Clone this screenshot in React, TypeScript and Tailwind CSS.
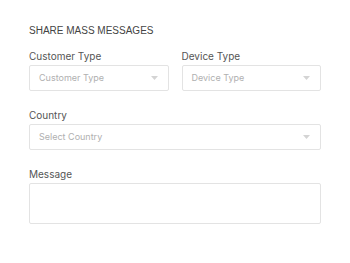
import { ReactNode } from 'react'

function Caret() {
  return (
    <svg width="7" height="4" viewBox="0 0 7 4" className="shrink-0">
      <path d="M0 0 L7 0 L3.5 4 Z" fill="#d4d4d4" />
    </svg>
  )
}

function Field({ label, children }: { label: string; children: ReactNode }) {
  return (
    <div className="flex flex-col">
      <label className="text-[10px] leading-[14px] text-[#555] mb-[2px]">{label}</label>
      {children}
    </div>
  )
}

function Select({ placeholder }: { placeholder: string }) {
  return (
    <div className="h-[26px] border border-[#e3e3e3] rounded-[2px] flex items-center justify-between pl-[9px] pr-[10px] bg-white">
      <span className="text-[9px] text-[#b0b0b0]">{placeholder}</span>
      <Caret />
    </div>
  )
}

export default function App() {
  return (
    <div
      className="w-[350px] h-[263px] bg-white px-[29px] pt-[23px]"
      style={{ fontFamily: 'Inter, "Open Sans", sans-serif' }}
    >
      <h2
        className="text-[10px] leading-[16px] text-[#444] font-normal mb-[10px]"
        style={{ fontFamily: '"Liberation Sans", Arial, sans-serif' }}
      >
        SHARE MASS MESSAGES
      </h2>

      <div className="grid grid-cols-2 gap-[13px]">
        <Field label="Customer Type">
          <Select placeholder="Customer Type" />
        </Field>
        <Field label="Device Type">
          <Select placeholder="Device Type" />
        </Field>
      </div>

      <div className="mt-[17px]">
        <Field label="Country">
          <Select placeholder="Select Country" />
        </Field>
      </div>

      <div className="mt-[17px]">
        <Field label="Message">
          <textarea className="h-[41px] w-full border border-[#e3e3e3] rounded-[2px] resize-none outline-none bg-white" />
        </Field>
      </div>
    </div>
  )
}
